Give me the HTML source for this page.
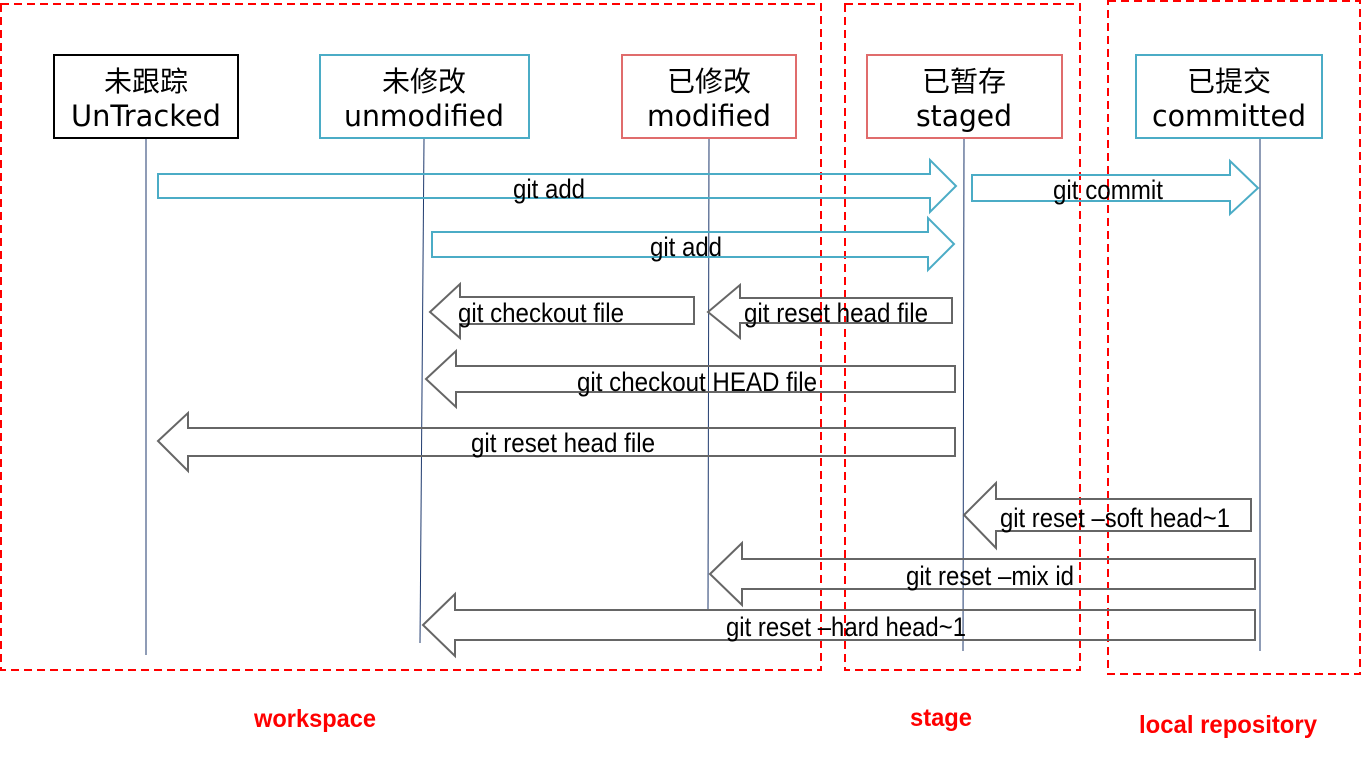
<!DOCTYPE html>
<html><head><meta charset="utf-8"><style>
html,body{margin:0;padding:0;background:#fff;width:1366px;height:757px;overflow:hidden}
</style></head><body>
<svg width="1366" height="757" xmlns="http://www.w3.org/2000/svg" style="display:block">
<g fill="none" stroke="#f00" stroke-width="2" stroke-dasharray="8,5">
<rect x="1" y="4" width="820" height="666"/>
<rect x="845" y="4" width="235" height="666"/>
<rect x="1108" y="1" width="252" height="673"/>
</g>
<g stroke="#1f3a6e" stroke-width="1">
<line x1="146" y1="139" x2="146" y2="655"/>
<line x1="424" y1="139" x2="420" y2="643"/>
<line x1="709" y1="139" x2="708" y2="611"/>
<line x1="964" y1="139" x2="963" y2="651"/>
<line x1="1260" y1="139" x2="1260" y2="651"/>
</g>
<g font-family="'DejaVu Sans','Noto Sans CJK SC',sans-serif" font-size="29" text-anchor="middle" fill="#000">
<rect x="54" y="55" width="184" height="83" fill="#fff" stroke="#000" stroke-width="2"/>
<text x="146" y="91" font-size="28" font-family="'Noto Sans CJK SC',sans-serif">未跟踪</text><text x="146" y="126" textLength="150" lengthAdjust="spacingAndGlyphs">UnTracked</text>
<rect x="320" y="55" width="209" height="83" fill="#fff" stroke="#4bacc6" stroke-width="2"/>
<text x="424" y="91" font-size="28" font-family="'Noto Sans CJK SC',sans-serif">未修改</text><text x="424" y="126" textLength="160" lengthAdjust="spacingAndGlyphs">unmodified</text>
<rect x="622" y="55" width="174" height="83" fill="#fff" stroke="#e06c6c" stroke-width="2"/>
<text x="709" y="91" font-size="28" font-family="'Noto Sans CJK SC',sans-serif">已修改</text><text x="709" y="126" textLength="124" lengthAdjust="spacingAndGlyphs">modified</text>
<rect x="867" y="55" width="195" height="83" fill="#fff" stroke="#e06c6c" stroke-width="2"/>
<text x="964" y="91" font-size="28" font-family="'Noto Sans CJK SC',sans-serif">已暂存</text><text x="964" y="126" textLength="96" lengthAdjust="spacingAndGlyphs">staged</text>
<rect x="1136" y="55" width="186" height="83" fill="#fff" stroke="#4bacc6" stroke-width="2"/>
<text x="1229" y="91" font-size="28" font-family="'Noto Sans CJK SC',sans-serif">已提交</text><text x="1229" y="126" textLength="154" lengthAdjust="spacingAndGlyphs">committed</text>
</g>
<g fill="none" stroke="#4bacc6" stroke-width="2">
<polygon points="158,174 930,174 930,160 956,186 930,212 930,198 158,198"/>
<polygon points="972,175 1230,175 1230,161 1258,188 1230,214 1230,201 972,201"/>
<polygon points="432,232 928,232 928,218 954,244 928,270 928,257 432,257"/>
</g>
<g fill="none" stroke="#666" stroke-width="2">
<polygon points="430,312 460,284 460,297 694,297 694,324 460,324 460,338"/>
<polygon points="708,312 740,285 740,298 952,298 952,323 740,323 740,338"/>
<polygon points="426,379 456,351 456,366 955,366 955,392 456,392 456,407"/>
<polygon points="158,441 188,413 188,428 955,428 955,456 188,456 188,471"/>
<polygon points="964,515 996,483 996,499 1251,499 1251,531 996,531 996,548"/>
<polygon points="710,574 742,543 742,559 1255,559 1255,589 742,589 742,605"/>
<polygon points="423,625 455,594 455,610 1255,610 1255,640 455,640 455,656"/>
</g>
<g font-family="'Liberation Sans',sans-serif" font-size="27" fill="#000" text-anchor="middle">
<text x="549" y="198" textLength="72" lengthAdjust="spacingAndGlyphs">git add</text>
<text x="1108" y="199" textLength="110" lengthAdjust="spacingAndGlyphs">git commit</text>
<text x="686" y="256" textLength="72" lengthAdjust="spacingAndGlyphs">git add</text>
<text x="541" y="322" textLength="166" lengthAdjust="spacingAndGlyphs">git checkout file</text>
<text x="836" y="322" textLength="184" lengthAdjust="spacingAndGlyphs">git reset head file</text>
<text x="697" y="391" textLength="240" lengthAdjust="spacingAndGlyphs">git checkout HEAD file</text>
<text x="563" y="452" textLength="184" lengthAdjust="spacingAndGlyphs">git reset head file</text>
<text x="1115" y="527" textLength="230" lengthAdjust="spacingAndGlyphs">git reset –soft head~1</text>
<text x="990" y="585" textLength="168" lengthAdjust="spacingAndGlyphs">git reset –mix id</text>
<text x="846" y="636" textLength="240" lengthAdjust="spacingAndGlyphs">git reset –hard head~1</text>
</g>
<g font-family="'Liberation Sans',sans-serif" font-size="25" font-weight="bold" fill="#f00" text-anchor="middle">
<text x="315" y="727" textLength="122" lengthAdjust="spacingAndGlyphs">workspace</text>
<text x="941" y="726" textLength="62" lengthAdjust="spacingAndGlyphs">stage</text>
<text x="1228" y="733" textLength="178" lengthAdjust="spacingAndGlyphs">local repository</text>
</g>
</svg>
</body></html>
